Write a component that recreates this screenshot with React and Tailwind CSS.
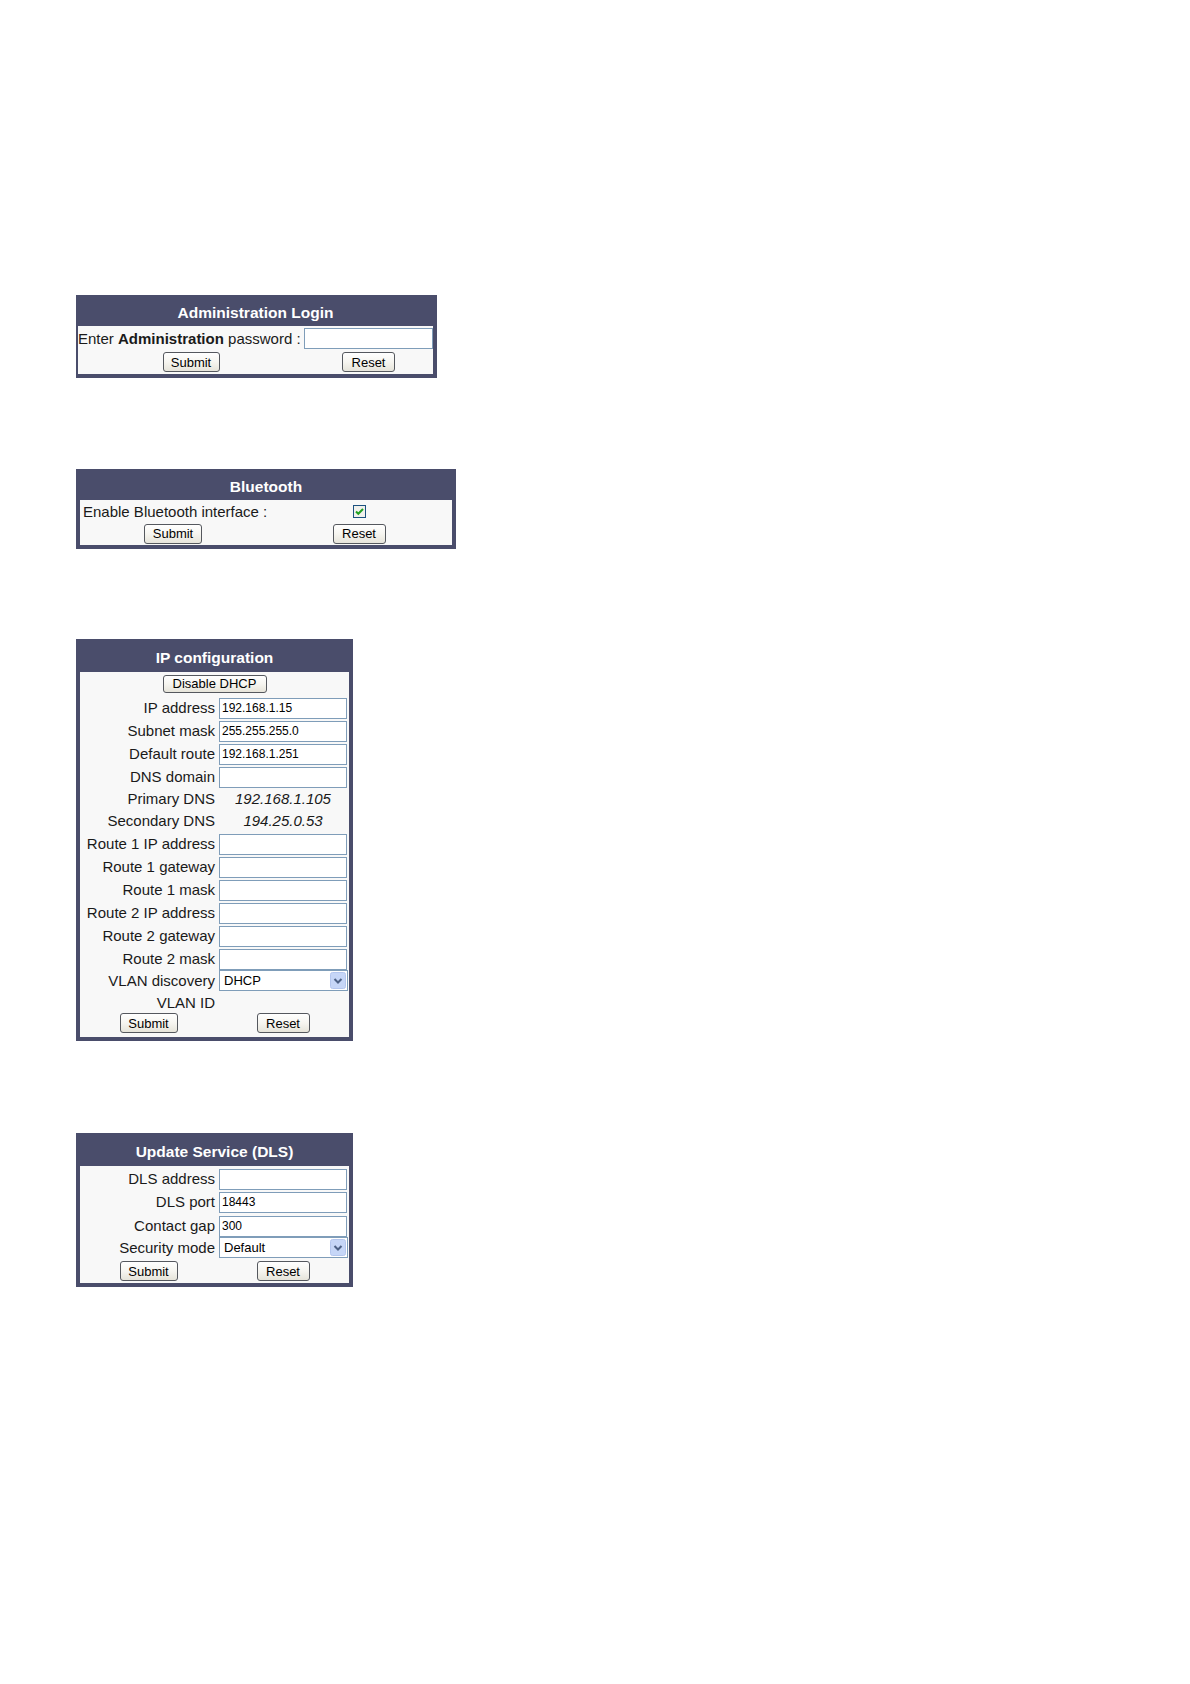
const FONT = "font-['Liberation_Sans',Arial,sans-serif]"

function Btn({ children, w = 'w-[58px]', h = 'h-[20px]' }) {
  return (
    <button
      type="button"
      className={`${w} ${h} rounded-[3px] border border-[#55585e] bg-linear-to-b from-white via-[#f6f5f0] to-[#e6e4da] text-[13px] leading-none text-black`}
    >
      {children}
    </button>
  )
}

function Field({ value = '', w = 'w-[128px]' }) {
  return (
    <input
      readOnly
      defaultValue={value}
      className={`${w} h-[21px] border border-[#7f9db9] bg-white px-[2px] text-[12px] leading-none text-black outline-none`}
    />
  )
}

function Dropdown({ value }) {
  return (
    <div className="flex h-[21px] w-[129px] items-center justify-between border border-[#7f9db9] bg-white pl-[4px] pr-[1px] text-[13px] text-black">
      <span>{value}</span>
      <svg width="16" height="17" viewBox="0 0 16 17" aria-hidden>
        <rect x="0.5" y="0.5" width="15" height="16" rx="2" fill="#c6d6f7" stroke="#b4c6ee" />
        <path d="M4.5 7 L8 10.5 L11.5 7" fill="none" stroke="#4d6185" strokeWidth="2" />
      </svg>
    </div>
  )
}

function Header({ children, h = 'h-[27px]' }) {
  return (
    <div className={`${h} flex items-center justify-center whitespace-nowrap bg-[#4a4d6b] text-[15.5px] font-bold text-white`}>
      {children}
    </div>
  )
}

function Row({ label, children, h = 'h-[23px]' }) {
  return (
    <div className={`grid ${h} grid-cols-[137px_1fr] items-center`}>
      <div className="whitespace-nowrap pr-[2px] text-right text-[15px] leading-none text-[#1a1a1a]">{label}</div>
      <div className="pl-[2px]">{children}</div>
    </div>
  )
}

function TextRow({ label, value, h = 'h-[22px]' }) {
  return (
    <div className={`grid ${h} grid-cols-[137px_1fr] items-center`}>
      <div className="whitespace-nowrap pr-[2px] text-right text-[15px] leading-none text-[#1a1a1a]">{label}</div>
      <div className="text-center text-[15px] italic leading-none text-[#1a1a1a]">{value}</div>
    </div>
  )
}

function ButtonRow({ h = 'h-[22px]' }) {
  return (
    <div className={`grid ${h} grid-cols-[137px_1fr] items-center`}>
      <div className="flex justify-center">
        <Btn>Submit</Btn>
      </div>
      <div className="flex justify-center">
        <Btn w="w-[53px]">Reset</Btn>
      </div>
    </div>
  )
}

export default function App() {
  return (
    <div className={`${FONT} min-h-[1684px] bg-white pl-[76px] pt-[295px]`}>
      {/* Administration Login */}
      <div className="w-[361px] border-y-4 border-l-2 border-r-4 border-[#4a4d6b] bg-[#f8f8f8]">
        <Header>Administration Login</Header>
        <div className="grid grid-cols-[226px_1fr]">
          <div className="flex h-[24px] items-center whitespace-nowrap text-[15px] leading-none text-[#1a1a1a]">
            Enter&nbsp;<b>Administration</b>&nbsp;password :
          </div>
          <div className="flex h-[24px] items-center">
            <Field w="w-[129px]" />
          </div>
          <div className="flex h-[24px] items-center justify-center">
            <Btn w="w-[57px]">Submit</Btn>
          </div>
          <div className="flex h-[24px] items-center justify-center">
            <Btn w="w-[53px]">Reset</Btn>
          </div>
        </div>
      </div>

      {/* Bluetooth */}
      <div className="mt-[91px] w-[380px] border-4 border-[#4a4d6b] bg-[#f8f8f8]">
        <Header>Bluetooth</Header>
        <div className="grid grid-cols-2">
          <div className="flex h-[22px] items-center whitespace-nowrap pl-[3px] text-[15px] leading-none text-[#1a1a1a]">
            Enable Bluetooth interface :
          </div>
          <div className="flex h-[22px] items-center justify-center">
            <svg width="13" height="13" viewBox="0 0 13 13" aria-hidden>
              <rect x="0.5" y="0.5" width="12" height="12" fill="#f1f1ec" stroke="#1c5180" />
              <path d="M3 6.5 L5.3 8.8 L10 4" fill="none" stroke="#21a121" strokeWidth="2" />
            </svg>
          </div>
          <div className="flex h-[23px] items-center justify-center">
            <Btn>Submit</Btn>
          </div>
          <div className="flex h-[23px] items-center justify-center">
            <Btn w="w-[53px]">Reset</Btn>
          </div>
        </div>
      </div>

      {/* IP configuration */}
      <div className="mt-[90px] w-[277px] border-4 border-[#4a4d6b] bg-[#f8f8f8]">
        <Header h="h-[29px]">IP configuration</Header>
        <div className="flex h-[23px] items-center justify-center">
          <Btn w="w-[104px]" h="h-[18px]">Disable DHCP</Btn>
        </div>
        <Row label="IP address"><Field value="192.168.1.15" /></Row>
        <Row label="Subnet mask"><Field value="255.255.255.0" /></Row>
        <Row label="Default route"><Field value="192.168.1.251" /></Row>
        <Row label="DNS domain"><Field /></Row>
        <TextRow label="Primary DNS" value="192.168.1.105" />
        <TextRow label="Secondary DNS" value="194.25.0.53" />
        <Row label="Route 1 IP address"><Field /></Row>
        <Row label="Route 1 gateway"><Field /></Row>
        <Row label="Route 1 mask"><Field /></Row>
        <Row label="Route 2 IP address"><Field /></Row>
        <Row label="Route 2 gateway"><Field /></Row>
        <Row label="Route 2 mask"><Field /></Row>
        <Row label="VLAN discovery"><Dropdown value="DHCP" /></Row>
        <TextRow label="VLAN ID" value="" h="h-[20px]" />
        <ButtonRow />
        <div className="h-[3px]" />
      </div>

      {/* Update Service (DLS) */}
      <div className="mt-[92px] w-[277px] border-4 border-[#4a4d6b] bg-[#f8f8f8]">
        <Header h="h-[29px]">Update Service (DLS)</Header>
        <Row label="DLS address"><Field /></Row>
        <Row label="DLS port" h="h-[24px]"><Field value="18443" /></Row>
        <Row label="Contact gap"><Field value="300" /></Row>
        <Row label="Security mode"><Dropdown value="Default" /></Row>
        <ButtonRow h="h-[24px]" />
      </div>
    </div>
  )
}
